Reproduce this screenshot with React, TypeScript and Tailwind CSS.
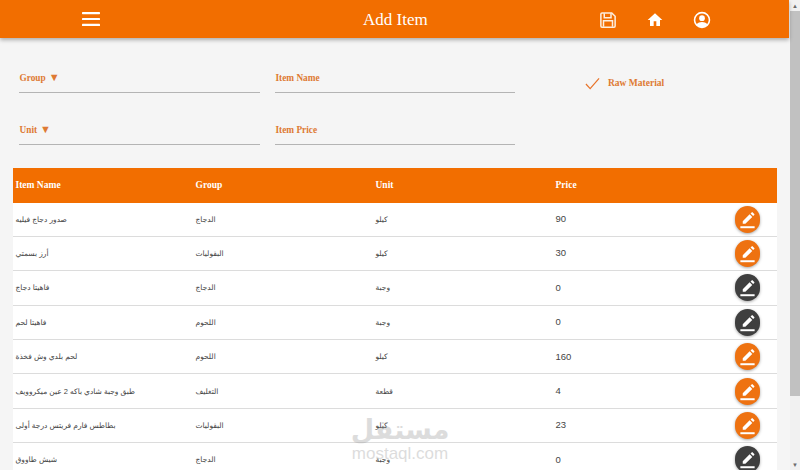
import { FC } from "react";

const serif = "font-['Liberation_Serif','Times_New_Roman',serif]";

const rows = [
  { name: "صدور دجاج فيليه", group: "الدجاج", unit: "كيلو", price: "90", raw: false },
  { name: "أرز بسمتي", group: "البقوليات", unit: "كيلو", price: "30", raw: false },
  { name: "فاهيتا دجاج", group: "الدجاج", unit: "وجبة", price: "0", raw: true },
  { name: "فاهيتا لحم", group: "اللحوم", unit: "وجبة", price: "0", raw: true },
  { name: "لحم بلدي وش فخذة", group: "اللحوم", unit: "كيلو", price: "160", raw: false },
  { name: "طبق وجبة شادي باكه 2 عين ميكروويف", group: "التغليف", unit: "قطعة", price: "4", raw: false },
  { name: "بطاطس فارم فريتس درجة أولى", group: "البقوليات", unit: "كيلو", price: "23", raw: false },
  { name: "شيش طاووق", group: "الدجاج", unit: "وجبة", price: "0", raw: true },
];

const EditIcon: FC = () => (
  <svg viewBox="0 0 24 24" className="h-[19px] w-[19px] fill-white">
    <path d="M3 20.500h18V23H3z" />
    <path d="M6 14.200 14.700 5.500l3.300 3.300-8.700 8.700H6zM15.800 4.400l1.400-1.400a1 1 0 0 1 1.400 0l1.900 1.900a1 1 0 0 1 0 1.400l-1.400 1.400z" />
  </svg>
);

const Field: FC<{ label: string; arrow?: boolean }> = ({ label, arrow }) => (
  <div className="flex h-[28px] items-start border-b border-[#b4b4b4] pl-[0.500px] pt-[7px] text-[9.300px] font-bold leading-[12px] text-[#de7a33]">
    <span>{label}</span>
    {arrow && <span className="ml-[3px] text-[11px] leading-[10px]">▼</span>}
  </div>
);

export default function App() {
  return (
    <div className={`flex h-[470px] w-[800px] overflow-hidden bg-[#f5f5f5] ${serif}`}>
      <div className="relative w-[789px] shrink-0">
        {/* Top bar */}
        <header className="flex h-[38px] items-center bg-[#f26e00] text-white shadow-[0_2px_4px_rgba(0,0,0,0.3)]">
          <svg viewBox="0 0 18 14" className="ml-[82px] h-[14px] w-[18px] fill-white">
            <rect y="0" width="18" height="2.200" rx="0.600" />
            <rect y="5.900" width="18" height="2.200" rx="0.600" />
            <rect y="11.800" width="18" height="2.200" rx="0.600" />
          </svg>
          <h1 className="ml-[263px] mt-px w-[63px] whitespace-nowrap text-[17px] font-normal">Add Item</h1>
          <svg viewBox="0 0 24 24" className="ml-[173px] mt-[2px] h-[18px] w-[18px] fill-none stroke-[#fdeede] stroke-2">
            <path d="M4 2.500h13l4.500 4.500v13a1.500 1.500 0 0 1-1.500 1.500H4A1.500 1.500 0 0 1 2.500 20V4A1.500 1.500 0 0 1 4 2.500z" />
            <path d="M7 3v6h9V3M6 21v-8h12v8" />
          </svg>
          <svg viewBox="0 0 24 24" className="ml-[30px] mt-[2px] h-[16px] w-[16px] fill-white">
            <path d="M10 21v-7h4v7h5.500v-9H23L12 2 1 12h3.500v9z" />
          </svg>
          <svg viewBox="0 0 24 24" className="ml-[30px] mt-[2px] h-[18px] w-[18px] fill-white">
            <path d="M12 1a11 11 0 1 0 0 22 11 11 0 0 0 0-22zm0 2.200a8.800 8.800 0 0 1 7 14.100c-1.500-1.800-4.200-2.800-7-2.800s-5.500 1-7 2.800A8.800 8.800 0 0 1 12 3.200z" />
            <circle cx="12" cy="9.500" r="3.800" />
          </svg>
        </header>

        {/* Form */}
        <div className="flex h-[130px] pl-[19px] pt-[27px]">
          <div className="flex w-[241px] flex-col gap-[24px]">
            <Field label="Group" arrow />
            <Field label="Unit" arrow />
          </div>
          <div className="ml-[15px] flex w-[240px] flex-col gap-[24px]">
            <Field label="Item Name" />
            <Field label="Item Price" />
          </div>
          <div className="ml-[70px] flex h-[36px] items-center text-[9.500px] font-bold text-[#de7a33]">
            <svg viewBox="0 0 16 13" className="h-[13px] w-[15px] fill-none stroke-[#e8742a] stroke-[1.300]">
              <path d="M1 7l4.500 5L15 1" />
            </svg>
            <span className="ml-2">Raw Material</span>
          </div>
        </div>

        {/* Items table */}
        <div className="ml-[12.500px] w-[764.500px] bg-white">
          <div className="grid h-[34.500px] grid-cols-[180px_180px_180px_1fr] items-center bg-[#f26e00] pl-[3px] text-[9.500px] font-bold text-white">
            <span>Item Name</span>
            <span>Group</span>
            <span>Unit</span>
            <span>Price</span>
          </div>
          {rows.map((row) => (
            <div
              key={row.name}
              className="grid h-[34.400px] grid-cols-[180px_180px_180px_1fr] items-center border-b border-[#dcdcdc] pl-[3px] font-['Liberation_Sans','DejaVu_Sans',sans-serif] text-[7.500px] text-[#444]"
            >
              <span className="whitespace-nowrap">{row.name}</span>
              <span>{row.group}</span>
              <span>{row.unit}</span>
              <div className="flex items-center justify-between pr-[17px]">
                <span className="text-[9.500px]">{row.price}</span>
                <button
                  type="button"
                  className={`flex h-[27px] w-[25px] items-center justify-center rounded-full shadow-[0_1px_3px_rgba(0,0,0,0.35)] ${
                    row.raw ? "bg-[#3f3f3f]" : "bg-[#ee7211]"
                  }`}
                >
                  <EditIcon />
                </button>
              </div>
            </div>
          ))}
        </div>

        {/* Watermark */}
        <div className="absolute left-[352px] top-[415px] flex w-[96px] flex-col items-center font-['Liberation_Sans','DejaVu_Sans',sans-serif] leading-none text-[#8f8f8f] opacity-30">
          <span className="whitespace-nowrap text-[27px] font-bold leading-[30px]">مستقل</span>
          <span className="whitespace-nowrap text-[17px]">mostaql.com</span>
        </div>
      </div>

      {/* Browser scrollbar */}
      <div className="ml-px flex w-[10px] flex-col items-center bg-[#f1f1f1] text-[6px] leading-none text-[#6b6b6b]">
        <span className="flex h-[11px] items-center">▲</span>
        <div className="h-[385px] w-full bg-[#c1c1c1]" />
        <span className="mt-auto flex h-[11px] items-center">▼</span>
      </div>
    </div>
  );
}
